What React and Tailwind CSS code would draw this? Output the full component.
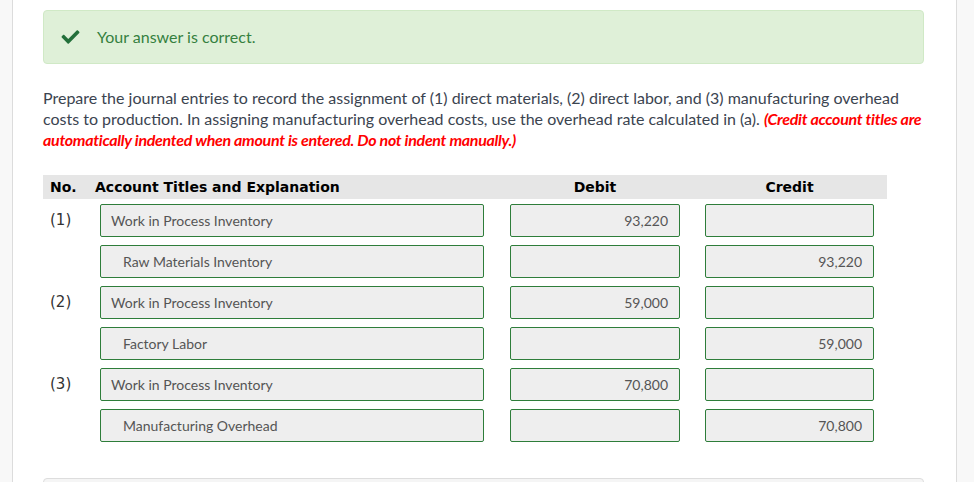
const rows = [
  { no: "(1)", title: "Work in Process Inventory", debit: "93,220", credit: "" },
  { no: "", title: "Raw Materials Inventory", debit: "", credit: "93,220", indent: true },
  { no: "(2)", title: "Work in Process Inventory", debit: "59,000", credit: "" },
  { no: "", title: "Factory Labor", debit: "", credit: "59,000", indent: true },
  { no: "(3)", title: "Work in Process Inventory", debit: "70,800", credit: "" },
  { no: "", title: "Manufacturing Overhead", debit: "", credit: "70,800", indent: true },
]

function CheckIcon() {
  return (
    <svg viewBox="0 0 512 512" className="h-[18px] w-[19px] fill-[#23703a]">
      <path d="M173.9 439.4 7.5 273c-10-10-10-26.2 0-36.2l36.2-36.2c10-10 26.2-10 36.2 0L192 312.7 432.1 72.6c10-10 26.2-10 36.2 0l36.2 36.2c10 10 10 26.2 0 36.2L210.1 439.4c-10 10-26.2 10-36.2 0z" />
    </svg>
  )
}

function Field({ value, align = "left", indent, width }) {
  return (
    <div
      className={`flex h-[33px] items-center rounded-[2px] border border-[#2e7d3a] bg-[#eeeeee] text-[14px] text-[#555] ${width} ${
        align === "right" ? "justify-end pr-[11px]" : indent ? "pl-[22px]" : "pl-[10px]"
      }`}
    >
      {value}
    </div>
  )
}

export default function App() {
  return (
    <div className="flex h-[482px] w-[974px] overflow-hidden bg-[#f8f8f8] font-['Lato',sans-serif]">
      <div className="ml-[12px] w-[945px] border-x border-[#dcdcdc] bg-white pl-[30px] pt-[10px]">
        {/* ALERT */}
        <div className="flex h-[54px] w-[881px] items-center rounded-[4px] border border-[#d0e9c6] bg-[#dff0d8] pl-[17px]">
          <CheckIcon />
          <span className="ml-[17px] text-[16px] text-[#35803f]">Your answer is correct.</span>
        </div>

        {/* QUESTION */}
        <p className="mt-[23px] w-[881px] text-[16px] leading-[21px] text-[#3b4450]">
          Prepare the journal entries to record the assignment of (1) direct materials, (2) direct labor, and (3)
          manufacturing overhead costs to production. In assigning manufacturing overhead costs, use the overhead
          rate calculated in (a).{" "}
          <span className="font-bold italic tracking-[-0.3px] text-[#ff0000]">
            (Credit account titles are automatically indented when amount is entered. Do not indent manually.)
          </span>
        </p>

        {/* TABLE */}
        <div className="mt-[25px] w-[844px]">
          <div className="flex h-[24px] items-center bg-[#e6e6e6] font-['DejaVu_Sans',sans-serif] text-[14px] font-bold text-black">
            <span className="w-[52px] pl-[7px]">No.</span>
            <span className="w-[415px]">Account Titles and Explanation</span>
            <span className="w-[170px] text-center">Debit</span>
            <span className="ml-[25px] w-[169px] text-center">Credit</span>
          </div>

          <div className="mt-[5px] flex flex-col gap-[8px]">
            {rows.map((row, i) => (
              <div key={i} className="flex items-center">
                <span className="w-[57px] pl-[7px] font-['DejaVu_Sans',sans-serif] text-[15px] text-[#333]">
                  {row.no}
                </span>
                <Field value={row.title} indent={row.indent} width="w-[384px]" />
                <div className="ml-[26px]">
                  <Field value={row.debit} align="right" width="w-[170px]" />
                </div>
                <div className="ml-[25px]">
                  <Field value={row.credit} align="right" width="w-[169px]" />
                </div>
              </div>
            ))}
          </div>
        </div>

        {/* NEXT PANEL */}
        <div className="mt-[36px] h-[20px] w-[881px] rounded-t-[4px] border border-[#dddddd] bg-[#f5f5f5]" />
      </div>
    </div>
  )
}
